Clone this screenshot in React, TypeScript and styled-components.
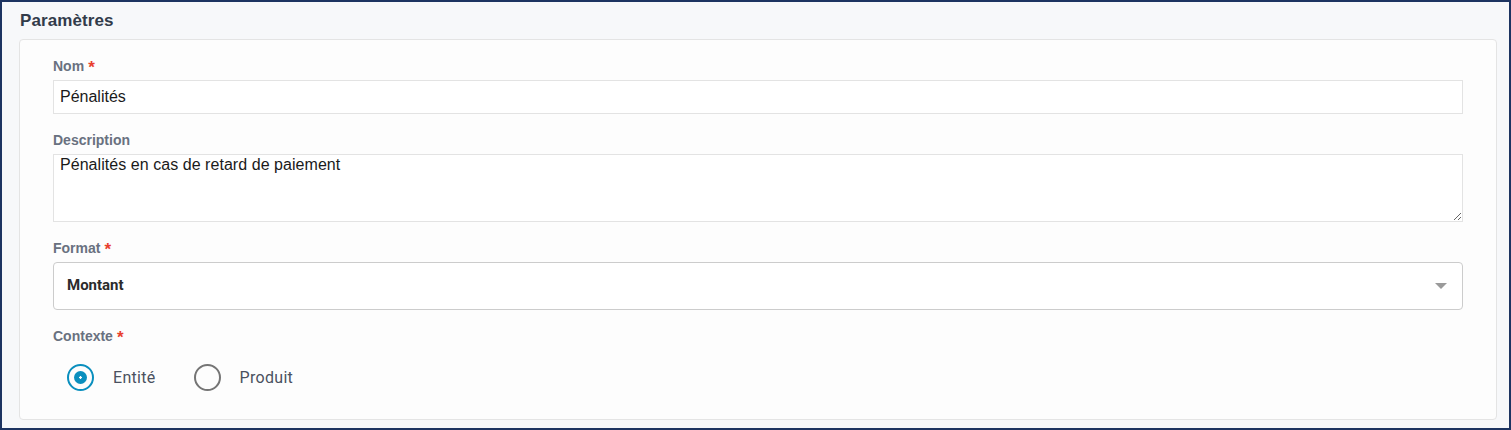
import React from "react";
import styled, { createGlobalStyle } from "styled-components";

const Global = createGlobalStyle`
  html, body { margin: 0; padding: 0; background: #ffffff; }
  * { box-sizing: border-box; }
`;

const Frame = styled.div`
  width: 1511px;
  height: 430px;
  border: 2px solid #1d3461;
  background: #f7f8fa;
  padding: 9px 12px 0 17px;
  display: flex;
  flex-direction: column;
  font-family: "Liberation Sans", Arial, sans-serif;
`;

const Title = styled.h2`
  margin: 0 0 8px 1px;
  font-size: 17px;
  line-height: 20px;
  font-weight: 700;
  color: #323b4a;
  letter-spacing: 0.1px;
`;

const Card = styled.div`
  background: #fdfdfd;
  border: 1px solid #e4e4e4;
  border-radius: 4px;
  height: 381px;
  padding: 18px 33px 0 33px;
  display: flex;
  flex-direction: column;
`;

const Field = styled.div`
  display: flex;
  flex-direction: column;
  margin-bottom: 18px;
`;

const Label = styled.label`
  font-size: 14px;
  line-height: 17px;
  font-weight: 700;
  color: #697180;
  margin-bottom: 5px;
`;

const Star = styled.span`
  color: #e8402f;
  margin-left: 4px;
  font-size: 17px;
  position: relative;
  top: 2px;
  line-height: 14px;
`;

const TextInput = styled.input`
  height: 34px;
  border: 1px solid #e3e3e3;
  background: #ffffff;
  padding: 0 6px;
  font-family: "Liberation Sans", Arial, sans-serif;
  font-size: 16px;
  color: #1a1a1a;
  outline: none;
`;

const TextArea = styled.textarea`
  height: 68px;
  border: 1px solid #e3e3e3;
  background: #ffffff;
  padding: 1px 6px;
  font-family: "Liberation Sans", Arial, sans-serif;
  font-size: 16px;
  line-height: 18px;
  letter-spacing: 0.05px;
  color: #1a1a1a;
  outline: none;
  resize: vertical;
`;

const Select = styled.div`
  height: 48px;
  border: 1px solid #cccccc;
  border-radius: 4px;
  background: #ffffff;
  display: flex;
  align-items: center;
  justify-content: space-between;
  padding: 0 15px 2px 13px;
  font-family: Roboto, "Liberation Sans", Arial, sans-serif;
  font-size: 15px;
  font-weight: 700;
  color: #2b2b2b;
`;

const Caret = styled.span`
  width: 0;
  height: 0;
  border-left: 6px solid transparent;
  border-right: 6px solid transparent;
  border-top: 6px solid #9a9a9a;
  margin-top: 2px;
`;

const RadioGroup = styled.div`
  display: flex;
  align-items: center;
  gap: 38px;
  padding: 14px 0 0 14px;
`;

const RadioItem = styled.label`
  display: flex;
  align-items: center;
  gap: 19px;
  font-family: Roboto, "Liberation Sans", Arial, sans-serif;
  font-size: 16px;
  letter-spacing: 0.3px;
  color: #4a5160;
`;

const RadioCircle = styled.span<{ $checked?: boolean }>`
  width: 27px;
  height: 27px;
  border-radius: 50%;
  border: 2.5px solid ${(p) => (p.$checked ? "#0a8fbe" : "#757575")};
  display: flex;
  align-items: center;
  justify-content: center;
  &::after {
    content: "";
    display: ${(p) => (p.$checked ? "block" : "none")};
    width: 13px;
    height: 13px;
    border-radius: 50%;
    background: radial-gradient(circle, #ffffff 0 1px, #0a8fbe 1.5px);
  }
`;

export default function App() {
  return (
    <>
      <Global />
      <Frame>
        <Title>Paramètres</Title>
        <Card>
          <Field>
            <Label>
              Nom<Star>*</Star>
            </Label>
            <TextInput defaultValue="Pénalités" />
          </Field>
          <Field>
            <Label>Description</Label>
            <TextArea defaultValue="Pénalités en cas de retard de paiement" />
          </Field>
          <Field>
            <Label>
              Format<Star>*</Star>
            </Label>
            <Select>
              <span>Montant</span>
              <Caret />
            </Select>
          </Field>
          <Field>
            <Label>
              Contexte<Star>*</Star>
            </Label>
            <RadioGroup>
              <RadioItem>
                <RadioCircle $checked />
                Entité
              </RadioItem>
              <RadioItem>
                <RadioCircle />
                Produit
              </RadioItem>
            </RadioGroup>
          </Field>
        </Card>
      </Frame>
    </>
  );
}
